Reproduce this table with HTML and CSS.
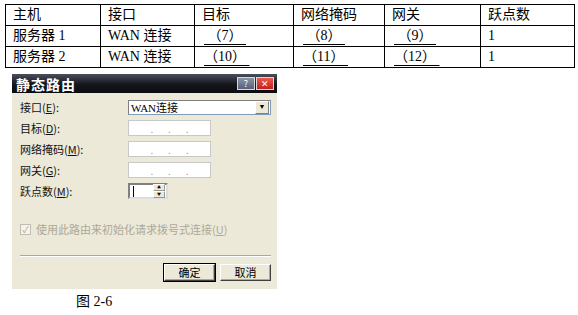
FILE: index.html
```html
<!DOCTYPE html>
<html lang="zh-CN">
  <head>
    <meta charset="UTF-8">
    <title>静态路由</title>
    <link rel="stylesheet" href="styles.css">
  </head>
  <body>
    <table class="routes">
      <tr>
        <td class="c1">主机</td><td class="c2">接口</td><td class="c3">目标</td>
        <td class="c4">网络掩码</td><td class="c5">网关</td><td class="c6">跃点数</td>
      </tr>
      <tr>
        <td>服务器 1</td><td>WAN 连接</td>
        <td><span class="blank">&nbsp;（7）&nbsp;</span></td>
        <td><span class="blank">&nbsp;（8）&nbsp;</span></td>
        <td><span class="blank">&nbsp;（9）&nbsp;</span></td>
        <td>1</td>
      </tr>
      <tr>
        <td>服务器 2</td><td>WAN 连接</td>
        <td><span class="blank">（10）&nbsp;</span></td>
        <td><span class="blank">（11）&nbsp;</span></td>
        <td><span class="blank">（12）&nbsp;</span></td>
        <td>1</td>
      </tr>
    </table>

    <div class="dialog">
      <div class="titlebar">
        <span class="title">静态路由</span>
        <span class="caption-btns">
          <span class="cbtn help">?</span>
          <span class="cbtn close">&#x2715;</span>
        </span>
      </div>
      <div class="dialog-body">
        <div class="field">
          <span class="flabel">接口(<u>E</u>):</span>
          <span class="combo">WAN连接<span class="drop">&#9660;</span></span>
        </div>
        <div class="field">
          <span class="flabel">目标(<u>D</u>):</span>
          <span class="ipbox"><i>.</i><i>.</i><i>.</i></span>
        </div>
        <div class="field">
          <span class="flabel">网络掩码(<u>M</u>):</span>
          <span class="ipbox"><i>.</i><i>.</i><i>.</i></span>
        </div>
        <div class="field">
          <span class="flabel">网关(<u>G</u>):</span>
          <span class="ipbox"><i>.</i><i>.</i><i>.</i></span>
        </div>
        <div class="field">
          <span class="flabel">跃点数(<u>M</u>):</span>
          <span class="spin"><span class="caret"></span><span class="arrows"><b>&#9650;</b><b>&#9660;</b></span></span>
        </div>
        <div class="check">
          <span class="box">&#10003;</span>
          <span>使用此路由来初始化请求拨号式连接(<u>U</u>)</span>
        </div>
        <div class="sep"></div>
        <div class="buttons">
          <span class="btn default">确定</span>
          <span class="btn">取消</span>
        </div>
      </div>
    </div>

    <p class="figure">图 2-6</p>
  </body>
</html>
```

FILE: styles.css
```css
body {
	margin: 0;
	padding: 4px 0 0 5px;
	background: #fff;
	font-family: "Liberation Serif", "Noto Sans CJK SC", serif;
	color: #000;
}

/* route table */
.routes {
	border-collapse: collapse;
	font-size: 14px;
}
.routes td {
	border: 1px solid #000;
	height: 20px;
	padding: 0 0 0 7px;
	line-height: 20px;
	white-space: nowrap;
}
.c1 {width: 87px;}
.c2 {width: 86px;}
.c3 {width: 91px;}
.c4 {width: 83px;}
.c5 {width: 88px;}
.c6 {width: 86px;}
.blank {
	text-decoration: underline;
	text-underline-offset: 4px;
	padding-left: 2px;
}

/* dialog */
.dialog {
	width: 265px;
	margin: 6px 0 0 7px;
	background: #ece9d8;
	font-family: "Noto Sans CJK SC", sans-serif;
	font-size: 11px;
}
.titlebar {
	height: 19px;
	background: linear-gradient(#4a4f5c, #14161c 55%, #0b0c10);
	display: flex;
	align-items: center;
	justify-content: space-between;
	padding: 0 3px 0 4px;
}
.title {
	color: #fff;
	font-weight: bold;
	font-size: 14px;
	letter-spacing: 1px;
	font-family: "Noto Sans CJK SC", serif;
}
.caption-btns {
	display: flex;
	gap: 1px;
}
.cbtn {
	width: 16px;
	height: 11px;
	font-size: 9px;
	line-height: 11px;
	text-align: center;
	color: #fff;
	border: 1px solid #d8d8d8;
}
.help {background: linear-gradient(#8c95a6, #57607a);}
.close {background: linear-gradient(#e85a50, #c8201a);}

.dialog-body {
	padding: 4px 6px 8px 8px;
}
.field {
	display: flex;
	align-items: center;
	height: 20px;
	margin-bottom: 1px;
}
.flabel {
	width: 108px;
	color: #111;
	line-height: 14px;
}
.flabel u, .check u {text-decoration: underline;}
.combo, .ipbox, .spin {
	background: #fff;
	border: 1px solid #7f9db9;
	border-top-color: #808080;
	border-left-color: #808080;
	height: 14px;
	box-sizing: border-box;
	display: flex;
	align-items: center;
}
.combo {
	width: 143px;
	height: 15px;
	justify-content: space-between;
	font-family: "Liberation Serif", "Noto Sans CJK SC", serif;
	font-size: 11px;
	padding-left: 2px;
}
.drop {
	width: 12px;
	height: 11px;
	margin-right: 1px;
	background: #ece9d8;
	border: 1px solid #fff;
	border-right-color: #808080;
	border-bottom-color: #808080;
	font-size: 7px;
	line-height: 11px;
	text-align: center;
}
.ipbox {
	width: 83px;
	height: 16px;
	justify-content: space-around;
	padding: 0 14px;
	border-color: #c8c8c8;
}
.ipbox i {
	font-style: normal;
	color: #999;
	font-size: 10px;
}
.spin {
	width: 40px;
	height: 16px;
	justify-content: space-between;
	padding-left: 3px;
	border: 2px solid #808080;
	border-right-color: #ddd;
	border-bottom-color: #ddd;
}
.caret {
	width: 1px;
	height: 11px;
	background: #000;
}
.arrows {
	display: flex;
	flex-direction: column;
	margin-right: 1px;
}
.arrows b {
	width: 10px;
	height: 5px;
	font-size: 4px;
	line-height: 5px;
	text-align: center;
	background: #ece9d8;
	border: 1px solid #fff;
	border-right-color: #999;
	border-bottom-color: #999;
	font-weight: normal;
}
.check {
	margin-top: 21px;
	color: #aca899;
	display: flex;
	align-items: center;
	gap: 5px;
	line-height: 14px;
}
.box {
	width: 9px;
	height: 9px;
	border: 1px solid #c0bdb0;
	background: #f4f3ee;
	font-size: 9px;
	line-height: 9px;
	text-align: center;
	color: #aca899;
}
.sep {
	margin: 19px 0 0 0;
	border-top: 1px solid #aca899;
	border-bottom: 1px solid #fff;
}
.buttons {
	display: flex;
	justify-content: flex-end;
	gap: 5px;
	margin-top: 7px;
}
.btn {
	width: 49px;
	height: 15px;
	line-height: 15px;
	text-align: center;
	background: #ece9d8;
	border: 1px solid #fff;
	border-right-color: #404040;
	border-bottom-color: #404040;
	box-shadow: inset -1px -1px 0 #aca899;
}
.default {
	outline: 1px solid #000;
}

.figure {
	margin: 5px 0 0 71px;
	font-size: 14px;
	line-height: 16px;
}
```
